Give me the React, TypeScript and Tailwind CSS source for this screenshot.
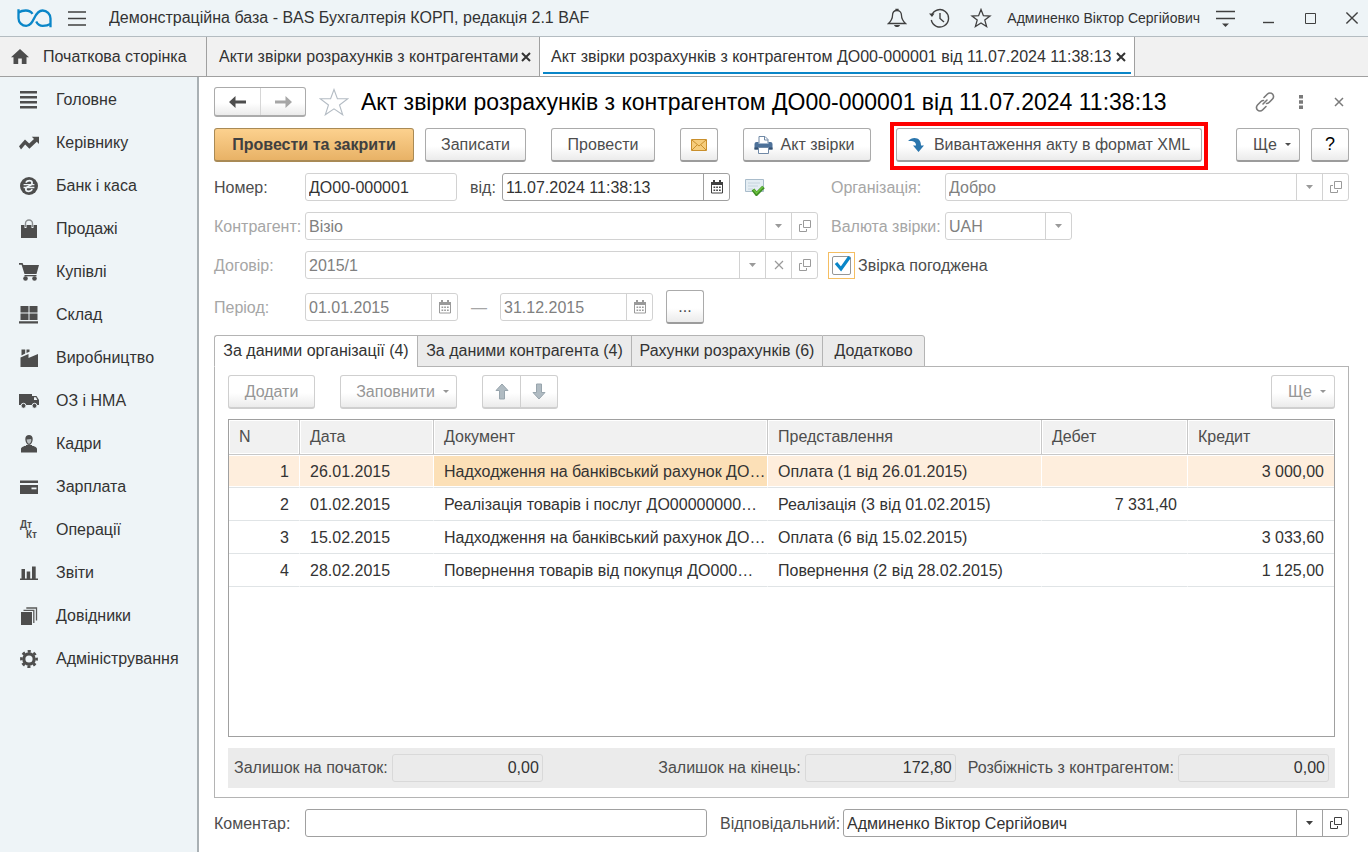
import type { ReactNode } from "react";
import { clsx } from "clsx";

/* ---------- section icons (20x20, filled) ---------- */

const sectionIcons: Record<string, ReactNode> = {
  main: <path d="M1 1h17v2.4H1zM1 6h17v2.4H1zM1 11h17v2.4H1zM1 16h17v2.4H1z" />,
  manager: <path d="M0 13.2 6 6.6l4.2 4L15 6l-2.2-2.2H20V11l-2.2-2.3-7.4 7L6.2 11.6 2 16.4z" />,
  bank: (
    <>
      <circle cx="10" cy="10" r="9" />
      <g fill="none" stroke="#eef4f7" strokeWidth="1.7">
        <path d="M6.8 6.6C7.8 5 9 4.6 10.3 4.6c1.8 0 2.8 1 2.8 2.3 0 3-6.3 3-6.3 6 0 1.4 1.2 2.4 3 2.4 1.4 0 2.6-.6 3.5-2" />
        <path d="M4.6 8.600h10.8M4.6 11.500h10.8" strokeWidth="1.3" />
      </g>
    </>
  ),
  sales: (
    <>
      <path d="M2 6h3.500v3h2V6h5v3h2V6H18v13H2z" />
      <path d="M6.500 8V4.500a3.500 3.500 0 0 1 7 0V8" fill="none" stroke="#8a8d8f" strokeWidth="1.4" />
    </>
  ),
  purchases: (
    <>
      <path d="M0 1h3.600l.8 2H20l-2.500 9H5.500L2.600 2.800H0z" />
      <path d="M5.500 13h12v1.300h-12z" />
      <circle cx="6.5" cy="16.5" r="2.300" />
      <circle cx="15.5" cy="16.5" r="2.300" />
    </>
  ),
  warehouse: <path d="M1.500 1h8v6.500h-8zM10.500 1h8v6.500h-8zM1.500 8.500h8V15h-8zM10.500 8.500h8V15h-8zM0 16.300h19v2.200H0z" />,
  production: <path d="M1.500 19V9.500l8-3.500v4L19 6v13zM2.500 1.500h3.700v4l-3.700 2zM7.500 1.500h3v2.300l-3 1.300z" />,
  assets: (
    <>
      <path d="M0 3h13v11H0zM13 5h4.500L20 9v5h-7z" />
      <path d="M15 6.300h2L18.300 9H15z" fill="#eef4f7" />
      <circle cx="4.5" cy="14.800" r="2.500" stroke="#eef4f7" />
      <circle cx="15.5" cy="14.800" r="2.500" stroke="#eef4f7" />
    </>
  ),
  staff: (
    <>
      <path d="M2 18.500V15c0-2 3-3 5-3.300l3 1.300 3-1.300c2 .3 5 1.300 5 3.300v3.500z" />
      <path d="M6.300 5C6.300 2.500 7.800 1 10 1s3.700 1.500 3.700 4-1.500 6-3.700 6-3.700-3.500-3.700-6z" />
      <path d="M7.600 5.500 12 5l.4 1C12 8.500 11.200 9.700 10 9.700S8 8.300 7.600 5.500z" fill="#b9bec0" />
      <path d="M7 11h6v2l-3 1-3-1z" />
    </>
  ),
  salary: (
    <>
      <path d="M1 3.500h18V6H1zM1 8h18v9H1z" />
      <path d="M12.500 10.500h5v1.800h-5z" fill="#eef4f7" />
    </>
  ),
  operations: (
    <g fontFamily="Liberation Sans, sans-serif" fontWeight="bold" fontSize="10">
      <text x="1" y="8">Дт</text>
      <text x="7" y="18">Кт</text>
    </g>
  ),
  reports: <path d="M1 15.500h18V17H1zM2.500 6H6v9.500H2.500zM7.700 8.500h3.500v7H7.700zM13 3.500h3.700v12H13z" />,
  catalogs: (
    <>
      <path d="M2 6h11v13H2z" />
      <path d="M4.500 4.300h10.300V17M7.300 2h10.200v12.500" fill="none" stroke="#5a5a5a" strokeWidth="1.3" />
    </>
  ),
  admin: (
    <>
      <circle cx="10" cy="10" r="5.200" fill="none" stroke="#4d4d4d" strokeWidth="3.2" />
      <circle cx="10" cy="10" r="7.600" fill="none" stroke="#4d4d4d" strokeWidth="2.6" strokeDasharray="3.1 2.87" strokeDashoffset="1.55" />
    </>
  ),
};

const sections = [
  { icon: "main", label: "Головне" },
  { icon: "manager", label: "Керівнику" },
  { icon: "bank", label: "Банк і каса" },
  { icon: "sales", label: "Продажі" },
  { icon: "purchases", label: "Купівлі" },
  { icon: "warehouse", label: "Склад" },
  { icon: "production", label: "Виробництво" },
  { icon: "assets", label: "ОЗ і НМА" },
  { icon: "staff", label: "Кадри" },
  { icon: "salary", label: "Зарплата" },
  { icon: "operations", label: "Операції" },
  { icon: "reports", label: "Звіти" },
  { icon: "catalogs", label: "Довідники" },
  { icon: "admin", label: "Адміністрування" },
];

const rows = [
  { n: 1, date: "26.01.2015", doc: "Надходження на банківський рахунок ДО…", view: "Оплата (1 від 26.01.2015)", debit: "", credit: "3 000,00" },
  { n: 2, date: "01.02.2015", doc: "Реалізація товарів і послуг ДО00000000…", view: "Реалізація (3 від 01.02.2015)", debit: "7 331,40", credit: "" },
  { n: 3, date: "15.02.2015", doc: "Надходження на банківський рахунок ДО…", view: "Оплата (6 від 15.02.2015)", debit: "", credit: "3 033,60" },
  { n: 4, date: "28.02.2015", doc: "Повернення товарів від покупця ДО000…", view: "Повернення (2 від 28.02.2015)", debit: "", credit: "1 125,00" },
];

/* ---------- small icons ---------- */

function Caret() {
  return (
    <svg width="7" height="4" viewBox="0 0 7 4" fill="currentColor" aria-hidden="true">
      <path d="M0 0h7L3.500 4z" />
    </svg>
  );
}

function SmallCaret() {
  return (
    <svg width="6" height="3" viewBox="0 0 6 3" fill="currentColor" aria-hidden="true">
      <path d="M0 0h6L3 3z" />
    </svg>
  );
}

function OpenIcon() {
  return (
    <svg width="12" height="12" viewBox="0 0 12 12" fill="none" stroke="currentColor" aria-hidden="true">
      <path d="M4.500.5h7v7h-7z" />
      <path d="M3 4.500H.5v7h7V9" />
    </svg>
  );
}

function CalendarIcon() {
  return (
    <svg width="12" height="14" viewBox="0 0 12 14" fill="currentColor" aria-hidden="true">
      <path d="M0 2h12v3H0z" />
      <path d="M2 0h2v3H2zM8 0h2v3H8z" />
      <path d="M.5 4.500h11v8.500H.5z" fill="none" stroke="currentColor" />
      <path d="M2.500 6.500h1.700v1.600H2.500zM5.200 6.500h1.700v1.600H5.200zM8 6.500h1.700v1.600H8zM2.500 9.500h1.700v1.600H2.500zM5.200 9.500h1.700v1.600H5.200zM8 9.500h1.700v1.600H8z" />
    </svg>
  );
}

function CrossIcon({ size = 10, width = 2 }: { size?: number; width?: number }) {
  return (
    <svg width={size} height={size} viewBox="0 0 10 10" stroke="currentColor" strokeWidth={width} aria-hidden="true">
      <path d="m1 1 8 8M9 1 1 9" />
    </svg>
  );
}

function ArrowUp() {
  return (
    <svg width="14" height="17" viewBox="0 0 14 17" fill="#b0bbc2" stroke="#98a5ad" aria-hidden="true">
      <path d="M7 1 13 7.500H9.500V16h-5V7.500H1z" />
    </svg>
  );
}

/* ---------- controls ---------- */

function Button({ children, className, disabled, label }: { children: ReactNode; className?: string; disabled?: boolean; label?: string }) {
  return (
    <button
      type="button"
      disabled={disabled}
      aria-label={label}
      className={clsx(
        "flex h-[34px] shrink-0 items-center justify-center rounded-[3px] border border-b-2 bg-linear-to-b from-white from-55% to-[#ebebeb] whitespace-nowrap",
        disabled ? "border-[#cfcfcf] text-[#969696]" : "border-[#ababab] border-b-[#9c9c9c] text-[#4d4d4d]",
        className,
      )}
    >
      {children}
    </button>
  );
}

function Field({ muted, className, children }: { muted?: boolean; className?: string; children: ReactNode }) {
  return (
    <div
      className={clsx(
        "flex h-7 min-w-0 rounded-[3px] border bg-white",
        muted ? "border-[#d2d2d2] text-[#808080]" : "border-[#a0a0a0] text-[#333]",
        className,
      )}
    >
      {children}
    </div>
  );
}

function FieldButton({ label, disabled, children }: { label: string; disabled?: boolean; children: ReactNode }) {
  return (
    <button
      type="button"
      aria-label={label}
      disabled={disabled}
      className={clsx(
        "flex w-[26px] shrink-0 items-center justify-center border-l",
        disabled ? "border-[#d2d2d2] text-[#9a9a9a]" : "border-[#a0a0a0] text-[#404040]",
      )}
    >
      {children}
    </button>
  );
}

function Picker({ id, value, disabled }: { id: string; value: string; disabled?: boolean }) {
  return (
    <div className="relative flex min-w-0 flex-1">
      <select id={id} disabled={disabled} className="w-full appearance-none truncate pt-px pr-7 pl-[3px] outline-none disabled:opacity-100">
        <option>{value}</option>
      </select>
      <span
        className={clsx(
          "pointer-events-none absolute inset-y-0 right-0 flex w-[26px] items-center justify-center border-l",
          disabled ? "border-[#d2d2d2] text-[#9a9a9a]" : "border-[#a0a0a0] text-[#404040]",
        )}
      >
        <Caret />
      </span>
    </div>
  );
}

function DateField({ id, value, disabled, className }: { id: string; value: string; disabled?: boolean; className?: string }) {
  return (
    <Field muted={disabled} className={className}>
      <input id={id} defaultValue={value} disabled={disabled} className="min-w-0 flex-1 px-[3px] pt-px outline-none" />
      <FieldButton label="Календар" disabled={disabled}>
        <CalendarIcon />
      </FieldButton>
    </Field>
  );
}

function Total({ id, label, value, className }: { id: string; label: string; value: string; className?: string }) {
  return (
    <div className={clsx("flex items-center gap-1", className)}>
      <label htmlFor={id} className="whitespace-nowrap">{label}</label>
      <input
        id={id}
        readOnly
        defaultValue={value}
        className="h-7 w-[151px] rounded-[3px] border border-[#d9d9d9] px-[3px] text-right text-[#333] outline-none"
      />
    </div>
  );
}

/* ---------- page parts ---------- */

function TopBar() {
  return (
    <header className="flex h-[37px] items-center border-b border-[#b4bcc1] bg-[#eef4f7] pr-[9px] pl-[17px]">
      <svg width="35" height="19" viewBox="0 0 35 19" fill="none" stroke="#0a86c8" strokeWidth="2.3" aria-label="BAS">
        <path d="M1.500.3v8.900a7.700 7.700 0 0 0 7.700 7.700c4.100 0 6-3.600 8.100-7.900S21.400 1.500 25.500 1.500A8 8 0 0 1 33.500 9.500v8.700" />
        <path d="M1.500 3.500C3.500 2.200 6 1.500 8.800 1.500c3.200 0 5.300 1.200 6.700 3.400M33.500 14.900c-2 1.300-4.500 2-7.700 2-3.200 0-5.300-1.700-6.600-4.400" />
      </svg>
      <button type="button" aria-label="Меню" className="ml-4 text-[#404040]">
        <svg width="18" height="15" viewBox="0 0 18 15" stroke="currentColor" strokeWidth="1.3" aria-hidden="true">
          <path d="M0 1h18M0 7.500h18M0 14h18" />
        </svg>
      </button>
      <h1 className="ml-[23px] truncate text-[#333]">Демонстраційна база - BAS Бухгалтерія КОРП, редакція 2.1 BAF</h1>

      <div className="ml-auto flex shrink-0 items-center text-[#404040]">
        <button type="button" aria-label="Сповіщення">
          <svg width="20" height="20" viewBox="0 0 20 20" fill="none" stroke="currentColor" strokeWidth="1.3" aria-hidden="true">
            <path d="M10 2.500c-3.300 0-4.500 2.500-4.500 5 0 4-1.500 5.500-4 8h17c-2.500-2.500-4-4-4-8 0-2.500-1.200-5-4.500-5zM9 2.500v-1h2v1" />
            <path d="M7 17h6c-.5 1.500-1.500 2-3 2s-2.500-.5-3-2z" fill="currentColor" stroke="none" />
          </svg>
        </button>
        <button type="button" aria-label="Історія" className="ml-[22px]">
          <svg width="21" height="20" viewBox="0 0 21 20" fill="none" stroke="currentColor" strokeWidth="1.4" aria-hidden="true">
            <path d="M2.600 7.500a8.700 8.700 0 1 1-.3 4.500M11 5v5.500l4 3.500" />
            <path d="M0 5.500h5.500L3 9z" fill="currentColor" stroke="none" />
          </svg>
        </button>
        <button type="button" aria-label="Обране" className="ml-5">
          <svg width="22" height="20" viewBox="0 0 22 20" fill="none" stroke="currentColor" strokeWidth="1.3" aria-hidden="true">
            <path d="m11 1.500 2.400 6.200 6.600.3-5.200 4.100 1.800 6.400L11 14.900l-5.600 3.600 1.800-6.400L2 8l6.600-.3z" />
          </svg>
        </button>
        <span className="ml-[15px] text-sm whitespace-nowrap text-[#333]">Админенко Віктор Сергійович</span>
        <button type="button" aria-label="Налаштування" className="ml-4">
          <svg width="19" height="17" viewBox="0 0 19 17" stroke="currentColor" strokeWidth="1.4" aria-hidden="true">
            <path d="M0 1.500h19M0 8.500h19" />
            <path d="M6 13.500h7L9.500 17z" fill="currentColor" stroke="none" />
          </svg>
        </button>
        <button type="button" aria-label="Згорнути" className="ml-7">
          <svg width="11" height="12" viewBox="0 0 11 12" stroke="currentColor" strokeWidth="1.4" aria-hidden="true">
            <path d="M0 10.500h11" />
          </svg>
        </button>
        <button type="button" aria-label="Розгорнути" className="ml-[31px]">
          <svg width="11" height="11" viewBox="0 0 11 11" fill="none" stroke="currentColor" aria-hidden="true">
            <path d="M.5.5h10v10H.5z" />
          </svg>
        </button>
        <button type="button" aria-label="Закрити вікно" className="ml-[29px]">
          <CrossIcon size={14} width={1} />
        </button>
      </div>
    </header>
  );
}

function WindowTabs() {
  return (
    <nav className="flex h-10 border-b border-[#a0a0a0] bg-[#f1f1f1] text-[#333]">
      <a href="#home" className="flex w-[207px] items-center gap-3.5 border-r border-[#a0a0a0] pl-[11px] whitespace-nowrap">
        <svg width="18" height="16" viewBox="0 0 18 16" fill="#4d4d4d" aria-hidden="true">
          <path d="M9 0l9 8.300h-2.500V15h-4.700v-5.500H7.200V15H2.500V8.300H0z" />
        </svg>
        Початкова сторінка
      </a>
      <div className="flex w-[333px] items-center justify-between border-r border-[#a0a0a0] pr-2 pl-3 whitespace-nowrap">
        <a href="#acts">Акти звірки розрахунків з контрагентами</a>
        <button type="button" aria-label="Закрити вкладку">
          <CrossIcon />
        </button>
      </div>
      <div className="flex w-[595px] border-r border-[#a0a0a0] bg-white px-[3px] pb-0.5">
        <div className="flex flex-1 items-center justify-between border-b-2 border-[#0a86c8] pt-1 pr-[5px] pl-2 whitespace-nowrap">
          <a href="#act">Акт звірки розрахунків з контрагентом ДО00-000001 від 11.07.2024 11:38:13</a>
          <button type="button" aria-label="Закрити вкладку">
            <CrossIcon />
          </button>
        </div>
      </div>
    </nav>
  );
}

function Sidebar() {
  return (
    <aside className="w-[199px] shrink-0 border-r-2 border-[#a9b0b4] bg-[#eef4f7]">
      <ul>
        {sections.map((s) => (
          <li key={s.icon}>
            <a href={`#${s.icon}`} className="flex h-[43px] items-center gap-[17px] pt-0.5 pl-[19px] text-[#333]">
              <svg width="20" height="20" viewBox="0 0 20 20" fill="#4d4d4d" aria-hidden="true">
                {sectionIcons[s.icon]}
              </svg>
              {s.label}
            </a>
          </li>
        ))}
      </ul>
    </aside>
  );
}

function TitleRow() {
  return (
    <div className="flex h-[30px] items-center">
      <div className="flex h-[30px] rounded-[3px] border border-b-2 border-[#ababab] bg-linear-to-b from-white from-55% to-[#ebebeb]">
        <button type="button" aria-label="Назад" className="flex w-[46px] items-center justify-center border-r border-[#d6d6d6] text-[#4d4d4d]">
          <svg width="17" height="12" viewBox="0 0 17 12" fill="currentColor" aria-hidden="true">
            <path d="M0 6l6.500-6v4.600H17v2.800H6.500V12z" />
          </svg>
        </button>
        <button type="button" aria-label="Вперед" className="flex w-11 items-center justify-center text-[#a6a6a6]">
          <svg width="17" height="12" viewBox="0 0 17 12" fill="currentColor" aria-hidden="true">
            <path d="M17 6l-6.500-6v4.600H0v2.800h10.500V12z" />
          </svg>
        </button>
      </div>
      <button type="button" aria-label="Додати в обране" className="ml-[13px]">
        <svg width="30" height="28" viewBox="0 0 30 28" fill="#fff" stroke="#b4bcc4" strokeWidth="1.1" aria-hidden="true">
          <path d="m15 1.500 3.400 9.300h10.400l-8.300 6.200 3.200 9.800L15 20.900l-8.700 5.900 3.200-9.800L1.200 10.800h10.400z" />
        </svg>
      </button>
      <h2 className="ml-3 min-w-0 flex-1 truncate text-[23px] text-black">
        Акт звірки розрахунків з контрагентом ДО00-000001 від 11.07.2024 11:38:13
      </h2>
      <div className="flex items-center text-[#7a7a7a]">
        <button type="button" aria-label="Посилання">
          <svg width="20" height="20" viewBox="0 0 20 20" fill="none" stroke="currentColor" strokeWidth="1.6" strokeLinecap="round" aria-hidden="true">
            <path d="m9 5.500 3.500-3.500a3.500 3.500 0 0 1 5 0 3.500 3.500 0 0 1 0 5L14 10.500a3.500 3.500 0 0 1-2.500 1" />
            <path d="m11 14.500-3.500 3.500a3.500 3.500 0 0 1-5 0 3.500 3.500 0 0 1 0-5L6 9.500a3.500 3.500 0 0 1 2.500-1M8 12l4-4" />
          </svg>
        </button>
        <button type="button" aria-label="Додаткові дії" className="ml-6">
          <svg width="4" height="14" viewBox="0 0 4 14" fill="currentColor" aria-hidden="true">
            <path d="M0 0h4v3.500H0zM0 5.200h4v3.500H0zM0 10.400h4v3.500H0z" />
          </svg>
        </button>
        <button type="button" aria-label="Закрити" className="mr-[5px] ml-[31px]">
          <CrossIcon size={10} width={1.5} />
        </button>
      </div>
    </div>
  );
}

function Toolbar() {
  return (
    <div className="flex">
      <button
        type="button"
        className="h-[34px] w-[200px] shrink-0 rounded-[3px] border border-b-2 border-[#a98a55] bg-linear-to-b from-[#fcd18e] to-[#e8b266] font-bold whitespace-nowrap text-[#404040]"
      >
        Провести та закрити
      </button>
      <Button className="ml-[11px] w-[101px]">Записати</Button>
      <Button className="ml-[25px] w-[104px]">Провести</Button>
      <Button className="ml-[25px] w-[38px]" label="Надіслати поштою">
        <svg width="16" height="12" viewBox="0 0 16 12" fill="#f6cd7c" stroke="#c98f2c" aria-hidden="true">
          <path d="M.5.5h15v11H.5z" />
          <path d="m1 1 7 6 7-6M1 11l5-5M15 11l-5-5" fill="none" />
        </svg>
      </Button>
      <Button className="ml-[25px] w-32 gap-2 pr-1.5">
        <svg width="19" height="18" viewBox="0 0 19 18" aria-hidden="true">
          <path d="M5 7V.5h6l3 3V7" fill="#fff" stroke="#7089a6" />
          <path d="M10.500.5V4H14" fill="none" stroke="#7089a6" />
          <path d="M2.500 6h2v1.500h10V6h2A2 2 0 0 1 18.500 8v5.500H.5V8a2 2 0 0 1 2-2z" fill="#4d7199" />
          <path d="M.5 11.500h18v2H.5z" fill="#34506f" />
          <path d="M4.500 11.500h10v6h-10z" fill="#fff" stroke="#7089a6" />
        </svg>
        Акт звірки
      </Button>
      <div className="relative ml-[25px]">
        <Button className="w-[306px] gap-2.5">
          <svg width="16" height="14" viewBox="0 0 16 14" fill="#2b76ad" aria-hidden="true">
            <path d="M0 3C2 1 4.300 0 6.500 0 10.500 0 13 2.700 13 7.500h3L10.500 14 5 7.500h3C8 4.500 6.500 2.500 0 3z" />
          </svg>
          Вивантаження акту в формат XML
        </Button>
        <span className="pointer-events-none absolute -inset-x-1.5 -top-1.5 -bottom-2 border-4 border-[#f00]" />
      </div>
      <Button className="ml-auto w-16 gap-2 pl-2">
        Ще <SmallCaret />
      </Button>
      <Button className="ml-[11px] w-[38px] text-[18px] text-black" label="Довідка">?</Button>
    </div>
  );
}

function Fields() {
  return (
    <div className="grid grid-cols-[604fr_518fr] gap-x-[13px] gap-y-[11px] text-[#a6a6a6]">
      <div className="flex items-center">
        <label htmlFor="number" className="w-[91px] shrink-0 pt-px text-[#4d4d4d]">Номер:</label>
        <input id="number" defaultValue="ДО00-000001" className="h-7 w-[152px] rounded-[3px] border border-[#d2d2d2] px-[3px] pt-px text-[#333] outline-none" />
        <label htmlFor="date" className="ml-[13px] w-8 pt-px text-[#4d4d4d]">від:</label>
        <DateField id="date" value="11.07.2024 11:38:13" className="w-[228px]" />
        <svg className="ml-[15px]" width="20" height="18" viewBox="0 0 20 18" aria-label="Проведено">
          <path d="M.5 1.500h18v12H.5z" fill="#e4edf3" stroke="#a9bccb" />
          <path d="M3 5h12M3 8h10M3 11h5" stroke="#c6d4de" />
          <path d="m8 11.500 3.500 4.500L18.500 9" fill="none" stroke="#3f8f24" strokeWidth="3.6" />
          <path d="m8.500 11.500 3 3.500 6.500-6.300" fill="none" stroke="#6cc13f" strokeWidth="1.6" />
        </svg>
      </div>
      <div className="flex items-center">
        <label htmlFor="org" className="w-[114px] shrink-0 pt-px">Організація:</label>
        <Field muted className="flex-1">
          <Picker id="org" value="Добро" disabled />
          <FieldButton label="Відкрити" disabled><OpenIcon /></FieldButton>
        </Field>
      </div>

      <div className="flex items-center">
        <label htmlFor="partner" className="w-[91px] shrink-0 pt-px">Контрагент:</label>
        <Field muted className="flex-1">
          <Picker id="partner" value="Візіо" disabled />
          <FieldButton label="Відкрити" disabled><OpenIcon /></FieldButton>
        </Field>
      </div>
      <div className="flex items-center">
        <label htmlFor="currency" className="w-[114px] shrink-0 pt-px whitespace-nowrap">Валюта звірки:</label>
        <Field muted className="w-[127px]">
          <Picker id="currency" value="UAH" disabled />
        </Field>
      </div>

      <div className="flex items-center">
        <label htmlFor="contract" className="w-[91px] shrink-0 pt-px">Договір:</label>
        <Field muted className="flex-1">
          <Picker id="contract" value="2015/1" disabled />
          <FieldButton label="Очистити" disabled><CrossIcon size={10} width={1.2} /></FieldButton>
          <FieldButton label="Відкрити" disabled><OpenIcon /></FieldButton>
        </Field>
      </div>
      <div className="-ml-[3px] flex items-center gap-[3px]">
        <span className="relative flex size-[27px] items-center justify-center border border-[#f5be62]">
          <input id="agreed" type="checkbox" defaultChecked className="size-[19px] appearance-none rounded-[2px] border border-[#969696] bg-white outline-none" />
          <svg className="pointer-events-none absolute top-0.5 left-[5px]" width="18" height="18" viewBox="0 0 18 18" fill="none" stroke="#0a86c8" strokeWidth="3.2" aria-hidden="true">
            <path d="m2 8 5 6L15.500 2" />
          </svg>
        </span>
        <label htmlFor="agreed" className="pt-px text-[#4d4d4d]">Звірка погоджена</label>
      </div>

      <div className="flex items-center">
        <label htmlFor="from" className="w-[91px] shrink-0 pt-px">Період:</label>
        <DateField id="from" value="01.01.2015" disabled className="w-[153px]" />
        <label htmlFor="to" className="mx-[13px] pt-px">—</label>
        <DateField id="to" value="31.12.2015" disabled className="w-[153px]" />
        <Button className="ml-[13px] w-[38px]" label="Обрати період">...</Button>
      </div>
    </div>
  );
}

function DataTable() {
  const th = "h-[35px] border-r border-b border-[#c8c8c8] bg-[#f1f1f1] px-2.5 text-left font-normal text-[#4d4d4d] shadow-[inset_0_0_0_1px_#fff] last:border-r-0";
  return (
    <div className="min-h-[318px] flex-1 border border-[#a0a0a0]">
      <table className="w-full table-fixed border-separate border-spacing-0">
        <colgroup>
          <col className="w-[71px]" />
          <col className="w-[134px]" />
          <col className="w-[334px]" />
          <col />
          <col className="w-[146px]" />
          <col className="w-[146px]" />
        </colgroup>
        <thead>
          <tr>
            <th className={th}>N</th>
            <th className={th}>Дата</th>
            <th className={th}>Документ</th>
            <th className={th}>Представлення</th>
            <th className={th}>Дебет</th>
            <th className={th}>Кредит</th>
          </tr>
        </thead>
        <tbody>
          {rows.map((r, i) => {
            const td = clsx(
              "h-[33px] border-r border-b border-r-white border-b-[#e0e4e6] pt-px pl-2.5 whitespace-nowrap last:border-r-0",
              i === 0 && "shadow-[inset_0_1px_0_#fff,inset_0_-1px_0_#fff]",
            );
            const bg = i === 0 && "bg-[#feeedd]";
            return (
              <tr key={r.n}>
                <td className={clsx(td, bg, "pr-2.5 text-right")}>{r.n}</td>
                <td className={clsx(td, bg)}>{r.date}</td>
                <td className={clsx(td, i === 0 && "bg-[#fce0b7]")}>{r.doc}</td>
                <td className={clsx(td, bg)}>{r.view}</td>
                <td className={clsx(td, bg, "pr-2.5 text-right")}>{r.debit}</td>
                <td className={clsx(td, bg, "pr-2.5 text-right")}>{r.credit}</td>
              </tr>
            );
          })}
        </tbody>
      </table>
    </div>
  );
}

function Details() {
  const tab = "h-8 shrink-0 border-t border-b border-l border-[#b4b4b4] text-center whitespace-nowrap last:rounded-tr-[3px] last:border-r";
  return (
    <div className="flex flex-1 flex-col text-[#333]">
      <div role="tablist" className="relative -mb-px flex">
        <button type="button" role="tab" aria-selected="true" className={clsx(tab, "w-[203px] rounded-tl-[3px] border-b-white bg-white")}>
          За даними організації (4)
        </button>
        <button type="button" role="tab" aria-selected="false" className={clsx(tab, "w-[214px] bg-[#ebebeb]")}>
          За даними контрагента (4)
        </button>
        <button type="button" role="tab" aria-selected="false" className={clsx(tab, "w-[191px] bg-[#ebebeb]")}>
          Рахунки розрахунків (6)
        </button>
        <button type="button" role="tab" aria-selected="false" className={clsx(tab, "w-[103px] bg-[#ebebeb]")}>
          Додатково
        </button>
      </div>
      <div className="flex flex-1 flex-col border border-[#b4b4b4] px-[13px] pt-2 pb-[9px]">
        <div className="mb-2.5 flex">
          <Button disabled className="w-[87px]">Додати</Button>
          <Button disabled className="ml-[25px] w-[117px] gap-2 pl-2">
            Заповнити <SmallCaret />
          </Button>
          <Button disabled className="ml-[25px] w-[39px] rounded-r-none" label="Перемістити вгору">
            <ArrowUp />
          </Button>
          <Button disabled className="w-[37px] rounded-l-none border-l-0" label="Перемістити вниз">
            <span className="rotate-180"><ArrowUp /></span>
          </Button>
          <Button disabled className="ml-auto w-16 gap-2 pl-2">
            Ще <SmallCaret />
          </Button>
        </div>
        <DataTable />
        <div className="mt-[11px] flex h-10 items-center bg-[#ebebeb] px-1.5 text-[#4d4d4d]">
          <Total id="opening" label="Залишок на початок:" value="0,00" />
          <Total id="closing" label="Залишок на кінець:" value="172,80" className="ml-auto" />
          <Total id="diff" label="Розбіжність з контрагентом:" value="0,00" className="ml-3" />
        </div>
      </div>
    </div>
  );
}

function FooterFields() {
  return (
    <div className="grid grid-cols-[493fr_629fr] gap-[13px] text-[#4d4d4d]">
      <div className="flex items-center">
        <label htmlFor="comment" className="w-[91px] shrink-0 pt-px">Коментар:</label>
        <input id="comment" className="h-7 min-w-0 flex-1 rounded-[3px] border border-[#a0a0a0] px-[3px] outline-none" />
      </div>
      <div className="flex items-center">
        <label htmlFor="responsible" className="w-[123px] shrink-0 pt-px">Відповідальний:</label>
        <Field className="flex-1">
          <Picker id="responsible" value="Админенко Віктор Сергійович" />
          <FieldButton label="Відкрити"><OpenIcon /></FieldButton>
        </Field>
      </div>
    </div>
  );
}

export default function App() {
  return (
    <div className="flex min-h-screen flex-col bg-white font-['Liberation_Sans',Arial,sans-serif] text-base">
      <TopBar />
      <WindowTabs />
      <div className="flex flex-1">
        <Sidebar />
        <main className="flex min-w-0 flex-1 flex-col gap-[11px] pt-2.5 pr-[19px] pb-[15px] pl-[15px]">
          <TitleRow />
          <Toolbar />
          <Fields />
          <Details />
          <FooterFields />
        </main>
      </div>
    </div>
  );
}
